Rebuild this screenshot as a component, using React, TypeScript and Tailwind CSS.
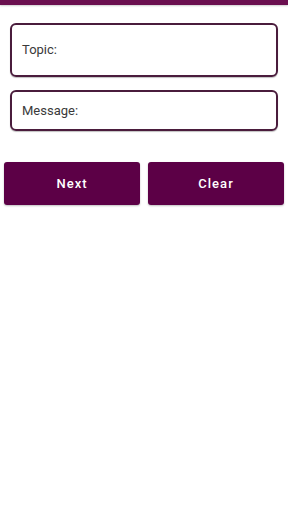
export default function App() {
  return (
    <div className="w-[288px] h-[512px] bg-white flex flex-col font-['Roboto',sans-serif]">
      <div className="h-[5px] bg-[#6a0f4f] shadow-[0_1px_2px_rgba(0,0,0,0.2)]" />

      {/* Inputs */}
      <div className="flex flex-col gap-[13px] px-[10px] pt-[18px]">
        <div className="h-[54px] border-2 border-[#4a1c3c] rounded-[6px] flex items-center px-[10px] shadow-[0_1px_1px_rgba(0,0,0,0.25)]">
          <span className="text-[13px] text-[#3a3a3a]">Topic:</span>
        </div>
        <div className="h-[41px] border-2 border-[#4a1c3c] rounded-[6px] flex items-center px-[10px] shadow-[0_1px_1px_rgba(0,0,0,0.25)]">
          <span className="text-[13px] text-[#3a3a3a]">Message:</span>
        </div>
      </div>

      {/* Actions */}
      <div className="flex gap-[8px] px-[4px] mt-[31px]">
        <button className="flex-1 h-[43px] bg-[#5c0046] rounded-[3px] text-white text-[13px] font-medium tracking-[0.08em] shadow-[0_1px_2px_rgba(0,0,0,0.25)]">
          Next
        </button>
        <button className="flex-1 h-[43px] bg-[#5c0046] rounded-[3px] text-white text-[13px] font-medium tracking-[0.08em] shadow-[0_1px_2px_rgba(0,0,0,0.25)]">
          Clear
        </button>
      </div>
    </div>
  );
}
